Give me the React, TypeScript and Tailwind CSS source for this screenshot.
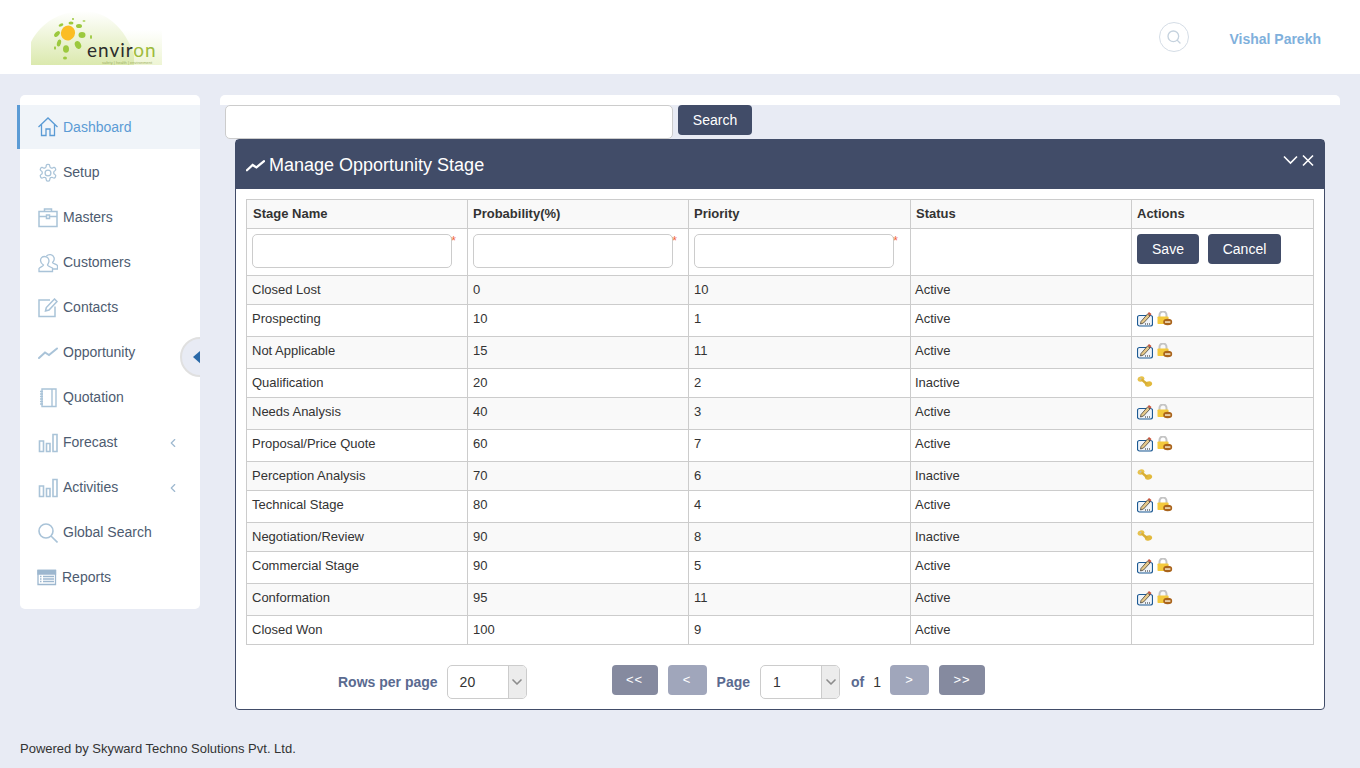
import React from 'react';
import { ChevronDown, ChevronLeft, Search } from 'lucide-react';

const stroke = '#a9c3d8';

const HomeIcon = () => (
  <svg width="20" height="20" viewBox="0 0 20 20" fill="none" stroke="#5b9bd5" strokeWidth="1.300">
    <path d="M.5 10 10 1 19.500 10M3.500 7.500V18.500H8V12H12V18.500H16.500V7.500" />
  </svg>
);
const GearIcon = () => (
  <svg width="20" height="20" viewBox="0 0 24 24" fill="none" stroke={stroke} strokeWidth="1.500">
    <path d="M12.200 1.500h-.4a2 2 0 0 0-2 2v.7a2 2 0 0 1-1 1.500l-.4.200a2 2 0 0 1-2 0l-.5-.3a2 2 0 0 0-2.700.7l-.2.400a2 2 0 0 0 .7 2.700l.4.300a2 2 0 0 1 1 1.700v.500a2 2 0 0 1-1 1.700l-.4.300a2 2 0 0 0-.7 2.700l.2.400a2 2 0 0 0 2.700.7l.5-.3a2 2 0 0 1 2 0l.4.200a2 2 0 0 1 1 1.500v.7a2 2 0 0 0 2 2h.4a2 2 0 0 0 2-2v-.7a2 2 0 0 1 1-1.500l.4-.2a2 2 0 0 1 2 0l.5.300a2 2 0 0 0 2.700-.7l.2-.4a2 2 0 0 0-.7-2.700l-.4-.3a2 2 0 0 1-1-1.700v-.500a2 2 0 0 1 1-1.700l.4-.3a2 2 0 0 0 .7-2.700l-.2-.4a2 2 0 0 0-2.700-.7l-.5.300a2 2 0 0 1-2 0l-.4-.2a2 2 0 0 1-1-1.500v-.7a2 2 0 0 0-2-2Z" />
    <circle cx="12" cy="12" r="3.500" />
  </svg>
);
const CaseIcon = () => (
  <svg width="20" height="20" viewBox="0 0 20 20" fill="none" stroke={stroke} strokeWidth="1.500">
    <path d="M1 3.500H19V18.500H1ZM6.500 3.500V1H13.500V3.500M1 8.500H8.500M11.500 8.500H19M8.500 7H11.500V10.500H8.500Z" />
  </svg>
);
const PersonIcon = () => (
  <svg width="20" height="20" viewBox="0 0 20 20" fill="none" stroke={stroke} strokeWidth="1.300">
    <path d="M8.500 3a4.500 4.500 0 0 1 7.500 1.500c.6 2-.3 4-1.500 5 0 1 3 1.500 5 3V16h-4.500M6.500 3.500c2.500 0 4.500 2 4.500 4.500 0 1.500-1 3-1.500 4 0 1 3 2 5 3V18.500H1V15.500c1-1.500 4-2 4.500-3.500C4 11 2.500 9.500 2.500 7.500c0-2 1.500-4 4-4Z" />
  </svg>
);
const EditIcon = () => (
  <svg width="20" height="20" viewBox="0 0 20 20" fill="none" stroke={stroke} strokeWidth="1.500">
    <path d="M12 2H1V18.500H17V8.500M7.500 13l.8-3.500L16.500 1 19 3.500l-8 8.500Z" />
  </svg>
);
const TrendIcon = ({ color = stroke, size = 20, width = 2 }: { color?: string; size?: number; width?: number }) => (
  <svg width={size} height={size} viewBox="0 0 20 20" fill="none" stroke={color} strokeWidth={width} strokeLinecap="round">
    <path d="M1 15 7 9.500 11 12 19 5.500" />
  </svg>
);
const BookIcon = () => (
  <svg width="20" height="20" viewBox="0 0 20 20" fill="none" stroke={stroke} strokeWidth="1.400">
    <path d="M4 1H18V18.500H4ZM14 1V18.500M2 3.500H5M2 6H5M2 8.500H5M2 11H5M2 13.500H5M2 16H5" />
  </svg>
);
const BarsIcon = () => (
  <svg width="20" height="20" viewBox="0 0 20 20" fill="none" stroke={stroke} strokeWidth="1.600">
    <path d="M1.500 8H5.500V18.500H1.500ZM8.500 10.500H12V18.500H8.500ZM15 1.500H19V18.500H15Z" />
  </svg>
);
const GlassIcon = () => (
  <svg width="20" height="20" viewBox="0 0 20 20" fill="none" stroke={stroke} strokeWidth="1.600">
    <circle cx="8" cy="8" r="7" />
    <path d="M13 13 19.500 19.500" />
  </svg>
);
const ReportIcon = () => (
  <svg width="20" height="20" viewBox="0 0 20 20" fill="none" stroke="#9db7cf" strokeWidth="1.300">
    <path d="M1 2.500H18.500V16.500H1Z" />
    <path d="M1 2.500H18.500V6H1Z" fill="#9db7cf" />
    <path d="M3 8.500H4.500M6 8.500H17M3 11H4.500M6 11H17M3 13.500H4.500M6 13.500H17" />
  </svg>
);

const PencilBox = () => (
  <svg width="16" height="16" viewBox="0 0 16 16">
    <rect x="0.500" y="4.500" width="15" height="10.500" rx="2" fill="#f0f4f9" stroke="#1c5a94" strokeWidth="1.200" />
    <path d="M4 10.500 10.500 3 13 5 6.500 12 3.500 13Z" fill="#e6c98a" stroke="#46423c" strokeWidth="0.800" />
    <path d="M10.700 2.500 12 1l2.500 2-1.200 1.700Z" fill="#c8553d" />
    <path d="M8 13H9M10 13H11M12 13H13" stroke="#222" strokeWidth="1" />
  </svg>
);
const LockIcon = () => (
  <svg width="16" height="16" viewBox="0 0 16 16">
    <path d="M2.500 6V4A3.300 3.300 0 0 1 9.500 4V6" fill="none" stroke="#c4c4c4" strokeWidth="2" />
    <rect x="0.500" y="5.500" width="11" height="7.500" rx="0.800" fill="#f4c93c" />
    <ellipse cx="10.700" cy="11" rx="4.500" ry="3.200" fill="#a9641c" />
    <rect x="8" y="10.300" width="5.400" height="1.500" fill="#f7e7c8" />
  </svg>
);
const KeyIcon = () => (
  <svg width="16" height="16" viewBox="0 0 16 16">
    <ellipse cx="4" cy="5" rx="3.500" ry="2.500" fill="#e8c24a" transform="rotate(-15 4 5)" />
    <ellipse cx="11.500" cy="10" rx="3.700" ry="2.600" fill="#e2b93c" transform="rotate(-15 11.500 10)" />
    <path d="M5 4.500 11 9 9 11 4 6.500Z" fill="#d8ae35" />
    <circle cx="3.500" cy="4.700" r="0.900" fill="#bdbdbd" />
  </svg>
);

// logo: a pale dome with leaves round a sun, the wordmark stays real text
const Logo = () => (
  <div className="relative w-[131px] h-[55px] overflow-hidden">
    <svg width="131" height="55" viewBox="0 0 131 55" className="block">
      <defs>
        <linearGradient id="dome" x1="0" y1="0" x2="0" y2="1">
          <stop offset="0" stopColor="#ffffff" />
          <stop offset="1" stopColor="#dbe9ae" />
        </linearGradient>
        <linearGradient id="side" x1="0" y1="0" x2="0" y2="1">
          <stop offset="0" stopColor="#ffffff" />
          <stop offset="1" stopColor="#eef5d4" />
        </linearGradient>
      </defs>
      <rect x="90" y="20" width="41" height="35" fill="url(#side)" />
      <path d="M0 55V32C10 12 30 1 52 1C76 1 94 18 103 45V55Z" fill="url(#dome)" />
      <ellipse cx="37" cy="23" rx="7" ry="7.500" fill="#fbbd24" transform="rotate(25 37 23)" />
      <g fill="#9cc93e">
        <ellipse cx="51" cy="25" rx="3.500" ry="3" />
        <ellipse cx="47" cy="35" rx="3" ry="4" transform="rotate(-25 47 35)" />
        <ellipse cx="35" cy="39" rx="3" ry="3.800" />
        <ellipse cx="28" cy="33" rx="2" ry="3.500" transform="rotate(15 28 33)" />
        <ellipse cx="26" cy="24" rx="3.500" ry="2" transform="rotate(-45 26 24)" />
        <ellipse cx="48" cy="16" rx="3" ry="2" />
        <ellipse cx="30" cy="15" rx="2.500" ry="1.500" transform="rotate(-25 30 15)" />
        <ellipse cx="40" cy="13" rx="2.500" ry="1.500" />
        <ellipse cx="34" cy="48" rx="2" ry="1.500" />
        <ellipse cx="60" cy="27" rx="1" ry="2" />
        <ellipse cx="24" cy="38" rx="1" ry="1.800" />
        <ellipse cx="53" cy="11" rx="1.500" ry="0.800" />
        <ellipse cx="42" cy="9" rx="1" ry="1" />
      </g>
    </svg>
    <span className="absolute left-[56px] top-[31px] text-[19px] leading-[18px] tracking-[1px] text-[#2c2c2c] font-['Lato',sans-serif]">
      envir<span className="text-[#9dbb3c]">on</span>
    </span>
    <span className="absolute left-[71px] top-[51px] text-[4px] leading-[4px] text-[#9fb163] font-['Liberation_Sans',sans-serif] whitespace-nowrap">
      safety | health | environment
    </span>
  </div>
);

const menu = [
  { label: 'Dashboard', icon: <HomeIcon />, active: true },
  { label: 'Setup', icon: <GearIcon /> },
  { label: 'Masters', icon: <CaseIcon /> },
  { label: 'Customers', icon: <PersonIcon /> },
  { label: 'Contacts', icon: <EditIcon /> },
  { label: 'Opportunity', icon: <TrendIcon /> },
  { label: 'Quotation', icon: <BookIcon /> },
  { label: 'Forecast', icon: <BarsIcon />, more: true },
  { label: 'Activities', icon: <BarsIcon />, more: true },
  { label: 'Global Search', icon: <GlassIcon /> },
  { label: 'Reports', icon: <ReportIcon />, tight: true },
];

type Row = { name: string; prob: string; prio: string; status: string; h: string; alt?: boolean };

const rows: Row[] = [
  { name: 'Closed Lost', prob: '0', prio: '10', status: 'Active', h: 'h-[29px]', alt: true },
  { name: 'Prospecting', prob: '10', prio: '1', status: 'Active', h: 'h-[32px]' },
  { name: 'Not Applicable', prob: '15', prio: '11', status: 'Active', h: 'h-[32px]', alt: true },
  { name: 'Qualification', prob: '20', prio: '2', status: 'Inactive', h: 'h-[29px]' },
  { name: 'Needs Analysis', prob: '40', prio: '3', status: 'Active', h: 'h-[32px]', alt: true },
  { name: 'Proposal/Price Quote', prob: '60', prio: '7', status: 'Active', h: 'h-[32px]' },
  { name: 'Perception Analysis', prob: '70', prio: '6', status: 'Inactive', h: 'h-[29px]', alt: true },
  { name: 'Technical Stage', prob: '80', prio: '4', status: 'Active', h: 'h-[32px]' },
  { name: 'Negotiation/Review', prob: '90', prio: '8', status: 'Inactive', h: 'h-[29px]', alt: true },
  { name: 'Commercial Stage', prob: '90', prio: '5', status: 'Active', h: 'h-[32px]' },
  { name: 'Conformation', prob: '95', prio: '11', status: 'Active', h: 'h-[32px]', alt: true },
  { name: 'Closed Won', prob: '100', prio: '9', status: 'Active', h: 'h-[29px]' },
];

const noActions = ['Closed Lost', 'Closed Won'];
const cell = 'border border-[#cccccc] px-[5px] pt-[5px] pb-0 align-top leading-[17px]';

const RequiredInput = () => (
  <div className="relative w-[200px] h-[34px] border border-[#cccccc] rounded-[5px] bg-white">
    <span className="absolute -right-[5px] -top-[1px] text-[12px] leading-[14px] text-[#f0663c]">*</span>
  </div>
);

const PageSelect = ({ value }: { value: string }) => (
  <div className="w-[80px] h-[34px] flex border border-[#cccccc] rounded-[5px] overflow-hidden bg-white">
    <span className="flex-1 pl-[12px] text-[14px] leading-[32px] text-[#333333]">{value}</span>
    <span className="w-[18px] bg-[#ececec] border-l border-[#cccccc] flex items-center justify-center">
      <ChevronDown size={16} strokeWidth={2.500} color="#8c8c8c" />
    </span>
  </div>
);

const PageButton = ({ label, w, light }: { label: string; w: string; light?: boolean }) => (
  <span className={`${w} h-[30px] rounded-[4px] flex items-center justify-center font-normal text-[13px] tracking-[1px] text-white ${light ? 'bg-[#a0a6bb]' : 'bg-[#858a9f]'}`}>
    {label}
  </span>
);

export default function App() {
  return (
    <div className="relative w-[1360px] h-[768px] overflow-hidden bg-[#e8ebf4] text-[14px] text-[#333333] font-['Liberation_Sans',Arial,sans-serif]">
      <header className="h-[74px] bg-white flex items-center pl-[31px] pr-[39px]">
        <div className="pt-[10px] self-start">
          <Logo />
        </div>
        <div className="ml-auto flex items-center">
          <span className="w-[30px] h-[30px] rounded-full border border-[#d5dde6] flex items-center justify-center">
            <Search size={16} color="#c5d2de" />
          </span>
          <span className="ml-[40px] pt-[5px] text-[14px] font-bold text-[#7fb0dc]">Vishal Parekh</span>
        </div>
      </header>

      <div className="flex pt-[21px]">
        {/* Sidebar */}
        <aside className="relative ml-5 w-[180px] h-[514px] bg-white rounded-[5px] pt-[10px]">
          {menu.map(item => (
            <div
              key={item.label}
              className={`relative flex items-center ${item.tight ? 'pl-[17px]' : 'pl-[18px]'} ${item.active ? 'h-[44px] mb-px bg-[#f0f4f9] text-[#5b9bd5]' : 'h-[45px] text-[#4d5b70]'}`}
            >
              {item.active && <span className="absolute -left-[3px] top-0 bottom-0 w-[3px] bg-[#5b9bd5]" />}
              <span className="w-[25px] shrink-0">{item.icon}</span>
              <span>{item.label}</span>
              {item.more && <ChevronLeft size={14} color="#9db8cf" className="absolute right-[20px]" />}
            </div>
          ))}
          {/* collapse handle */}
          <div className="absolute right-0 top-[242px] w-[20px] h-[40px] overflow-hidden">
            <div className="w-[40px] h-[40px] rounded-full bg-[#e8ebf4] border-2 border-[#e0e0e0] flex items-center pl-[11px]">
              <span className="w-0 h-0 border-y-[7px] border-y-transparent border-r-[8px] border-r-[#2a69a8]" />
            </div>
          </div>
        </aside>

        {/* Content */}
        <main className="ml-5 w-[1120px]">
          <div className="h-[10px] bg-white rounded-t-[5px]" />
          <div className="h-[34px] flex items-start pl-[5px]">
            <div className="w-[448px] h-[34px] bg-white border border-[#cccccc] rounded-[5px]" />
            <button className="ml-[5px] w-[74px] h-[30px] rounded-[4px] bg-[#414c68] text-white text-[14px]">Search</button>
          </div>

          <section className="ml-[15px] w-[1090px] h-[571px] bg-white border border-[#414c68] rounded-[4px]">
            <div className="relative h-[49px] pt-[2px] bg-[#414c68] text-white flex items-center pl-[10px]">
              <TrendIcon color="#ffffff" size={19} width={2.400} />
              <span className="ml-[4px] text-[18px]">Manage Opportunity Stage</span>
              <svg className="absolute right-[9px] top-[14px]" width="32" height="14" viewBox="0 0 32 14" fill="none" stroke="#ffffff" strokeWidth="1.600">
                <path d="M1 2.500 7.500 9 14 2.500M20 1.500 30 11.500M30 1.500 20 11.500" />
              </svg>
            </div>

            <div className="pt-[10px] pl-[10px]">
              <table className="w-[1067px] table-fixed border-collapse text-[13px]">
                <colgroup>
                  <col className="w-[221px]" />
                  <col className="w-[221px]" />
                  <col className="w-[222px]" />
                  <col className="w-[221px]" />
                  <col className="w-[182px]" />
                </colgroup>
                <thead>
                  <tr className="h-[29px] bg-[#f9f9f9] text-left">
                    {['Stage Name', 'Probability(%)', 'Priority', 'Status', 'Actions'].map(h => (
                      <th key={h} className="border border-[#cccccc] px-[5px] first:pl-[6px] py-0 font-bold text-[#333333]">{h}</th>
                    ))}
                  </tr>
                </thead>
                <tbody>
                  <tr className="h-[47px]">
                    <td className="border border-[#cccccc] px-[5px] pt-[5px] align-top"><RequiredInput /></td>
                    <td className="border border-[#cccccc] px-[5px] pt-[5px] align-top"><RequiredInput /></td>
                    <td className="border border-[#cccccc] px-[5px] pt-[5px] align-top"><RequiredInput /></td>
                    <td className="border border-[#cccccc] px-[5px]"></td>
                    <td className="border border-[#cccccc] px-[5px] pt-[5px] align-top">
                      <div className="flex gap-[9px] text-[14px]">
                        <button className="w-[62px] h-[30px] rounded-[4px] bg-[#414c68] text-white">Save</button>
                        <button className="w-[73px] h-[30px] rounded-[4px] bg-[#414c68] text-white">Cancel</button>
                      </div>
                    </td>
                  </tr>
                  {rows.map(r => (
                    <tr key={r.name} className={`${r.h} ${r.alt ? 'bg-[#f9f9f9]' : 'bg-white'}`}>
                      <td className={cell}>{r.name}</td>
                      <td className={cell}>{r.prob}</td>
                      <td className={cell}>{r.prio}</td>
                      <td className={`${cell} pl-[4px]`}>{r.status}</td>
                      <td className={cell}>
                        {noActions.includes(r.name) ? null : r.status === 'Inactive' ? (
                          <div className="flex"><KeyIcon /></div>
                        ) : (
                          <div className="flex gap-[4px] mt-[1px]"><PencilBox /><LockIcon /></div>
                        )}
                      </td>
                    </tr>
                  ))}
                </tbody>
              </table>
            </div>

            {/* Pager */}
            <div className="flex items-center pl-[102px] pt-[20px] font-bold text-[#5a6a90]">
              <span>Rows per page</span>
              <span className="ml-[9px] font-normal"><PageSelect value="20" /></span>
              <span className="ml-[85px] mb-[4px] flex items-center gap-[10px]">
                <PageButton label="<<" w="w-[46px]" />
                <PageButton label="<" w="w-[39px]" light />
              </span>
              <span className="ml-[10px]">Page</span>
              <span className="ml-[10px] font-normal"><PageSelect value="1" /></span>
              <span className="ml-[11px]">of</span>
              <span className="ml-[9px] font-normal text-[#333333]">1</span>
              <span className="ml-[9px] mb-[4px] flex items-center gap-[10px]">
                <PageButton label=">" w="w-[39px]" light />
                <PageButton label=">>" w="w-[46px]" />
              </span>
            </div>
          </section>
        </main>
      </div>

      <footer className="pl-5 pt-[29px] text-[13px] text-[#333333]">Powered by Skyward Techno Solutions Pvt. Ltd.</footer>
    </div>
  );
}
